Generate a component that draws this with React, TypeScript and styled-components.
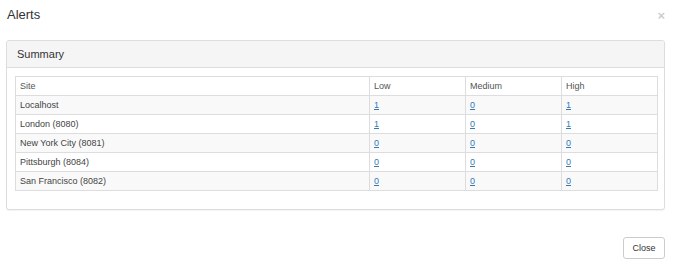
import React from 'react';
import styled, { createGlobalStyle } from 'styled-components';

const GlobalStyle = createGlobalStyle`
  html, body {
    margin: 0;
    padding: 0;
    background: #fff;
    font-family: "Liberation Sans", Arial, sans-serif;
    color: #333;
  }
`;

const rows = [
  { site: 'Localhost', low: 1, medium: 0, high: 1 },
  { site: 'London (8080)', low: 1, medium: 0, high: 1 },
  { site: 'New York City (8081)', low: 0, medium: 0, high: 0 },
  { site: 'Pittsburgh (8084)', low: 0, medium: 0, high: 0 },
  { site: 'San Francisco (8082)', low: 0, medium: 0, high: 0 },
];

export default function App() {
  return (
    <>
      <GlobalStyle />
      <Modal>
        <Header>
          <Title>Alerts</Title>
          <Dismiss>×</Dismiss>
        </Header>
        <Body>
          <Panel>
            <PanelHeading>Summary</PanelHeading>
            <PanelBody>
              <Table>
                <colgroup>
                  <col style={{ width: 354 }} />
                  <col style={{ width: 96 }} />
                  <col style={{ width: 96 }} />
                  <col style={{ width: 96 }} />
                </colgroup>
                <thead>
                  <tr>
                    <Th>Site</Th>
                    <Th>Low</Th>
                    <Th>Medium</Th>
                    <Th>High</Th>
                  </tr>
                </thead>
                <tbody>
                  {rows.map((r, i) => (
                    <Row key={r.site} $striped={i % 2 === 0}>
                      <Td>{r.site}</Td>
                      <Td><Count href="#">{r.low}</Count></Td>
                      <Td><Count href="#">{r.medium}</Count></Td>
                      <Td><Count href="#">{r.high}</Count></Td>
                    </Row>
                  ))}
                </tbody>
              </Table>
            </PanelBody>
          </Panel>
        </Body>
        <Footer>
          <Button>Close</Button>
        </Footer>
      </Modal>
    </>
  );
}

const Modal = styled.div`
  width: 673px;
  height: 266px;
  display: flex;
  flex-direction: column;
`;

const Header = styled.div`
  height: 30px;
  display: flex;
  align-items: center;
  justify-content: space-between;
  padding: 0 8px 0 7px;
`;

const Title = styled.h4`
  margin: 0;
  font-size: 13px;
  font-weight: normal;
  line-height: 30px;
  color: #333;
`;

const Dismiss = styled.span`
  font-size: 13px;
  font-weight: bold;
  color: #000;
  opacity: 0.2;
  line-height: 1;
`;

const Body = styled.div`
  padding: 10px 8px 0 6px;
`;

const Panel = styled.div`
  border: 1px solid #ddd;
  border-radius: 3px;
  background: #fff;
  box-shadow: 0 1px 1px rgba(0, 0, 0, 0.05);
`;

const PanelHeading = styled.div`
  height: 26px;
  line-height: 26px;
  padding: 0 10px;
  font-size: 11px;
  color: #333;
  background: #f5f5f5;
  border-bottom: 1px solid #ddd;
  border-radius: 3px 3px 0 0;
`;

const PanelBody = styled.div`
  padding: 8px 7px 18px 8px;
`;

const Table = styled.table`
  width: 642px;
  border-collapse: collapse;
  table-layout: fixed;
  border: 1px solid #ddd;
  font-size: 9px;
`;

const Th = styled.th`
  text-align: left;
  font-weight: normal;
  color: #555;
  padding: 3px 4px;
  line-height: 12px;
  border: 1px solid #ddd;
`;

const Row = styled.tr<{ $striped: boolean }>`
  background: ${(p) => (p.$striped ? '#f9f9f9' : '#fff')};
`;

const Td = styled.td`
  padding: 3px 4px;
  line-height: 12px;
  color: #444;
  border: 1px solid #ddd;
`;

const Count = styled.a`
  color: #337ab7;
  text-decoration: underline;
`;

const Footer = styled.div`
  margin-top: auto;
  display: flex;
  justify-content: flex-end;
  padding: 0 8px 7px 0;
`;

const Button = styled.button`
  width: 42px;
  height: 22px;
  padding: 0;
  font-family: "Liberation Sans", Arial, sans-serif;
  font-size: 9px;
  color: #333;
  background: #fff;
  border: 1px solid #ccc;
  border-radius: 3px;
`;
